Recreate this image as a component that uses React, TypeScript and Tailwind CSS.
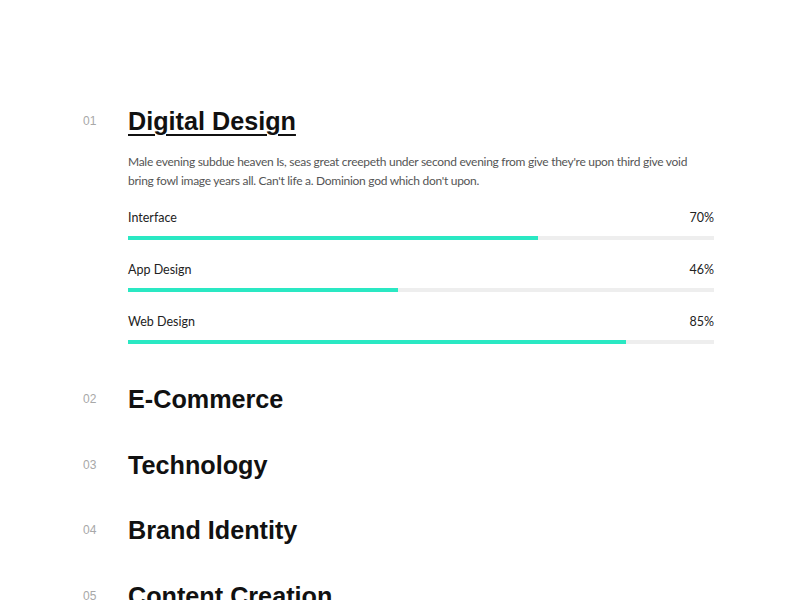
import React from "react";

const skills = [
  { name: "Interface", value: 70 },
  { name: "App Design", value: 46 },
  { name: "Web Design", value: 85 },
];

const others = [
  { no: "02", title: "E-Commerce" },
  { no: "03", title: "Technology" },
  { no: "04", title: "Brand Identity" },
  { no: "05", title: "Content Creation" },
];

function Heading({ no, title, active }: { no: string; title: string; active?: boolean }) {
  return (
    <div className="flex items-center h-[30px]">
      <span className="w-[45px] text-[12px] text-[#a8a8a8]" style={{ fontFamily: "'Liberation Sans', sans-serif" }}>
        {no}
      </span>
      <h2
        className={
          "text-[25.2px] leading-[30px] font-bold text-[#111] " +
          (active ? "underline decoration-2 underline-offset-[4px]" : "")
        }
        style={{ fontFamily: "'Liberation Sans', Arial, sans-serif" }}
      >
        {title}
      </h2>
    </div>
  );
}

export default function App() {
  return (
    <div className="h-[600px] overflow-hidden bg-white pl-[83px] pt-[106px] pr-[86px]">
      <Heading no="01" title="Digital Design" active />
      <div className="pl-[45px] pt-[16px]" style={{ fontFamily: "Lato, sans-serif" }}>
        <p className="text-[12px] leading-[19px] tracking-[-0.28px] text-[#555]">
          Male evening subdue heaven Is, seas great creepeth under second evening from give they're upon third give void
          bring fowl image years all. Can't life a. Dominion god which don't upon.
        </p>
        <div className="pt-[18px] flex flex-col">
          {skills.map((s) => (
            <div key={s.name} className="pb-[20.5px]">
              <div className="flex justify-between text-[12.5px] leading-[19px] text-[#222]">
                <span>{s.name}</span>
                <span>{s.value}%</span>
              </div>
              <div className="mt-[8.5px] h-[4px] bg-[#eeeeee]">
                <div className="h-full bg-[#2ae8c3]" style={{ width: `${s.value}%` }} />
              </div>
            </div>
          ))}
        </div>
      </div>
      <div className="flex flex-col gap-[35.5px] pt-[20px]">
        {others.map((o) => (
          <Heading key={o.no} no={o.no} title={o.title} />
        ))}
      </div>
    </div>
  );
}
